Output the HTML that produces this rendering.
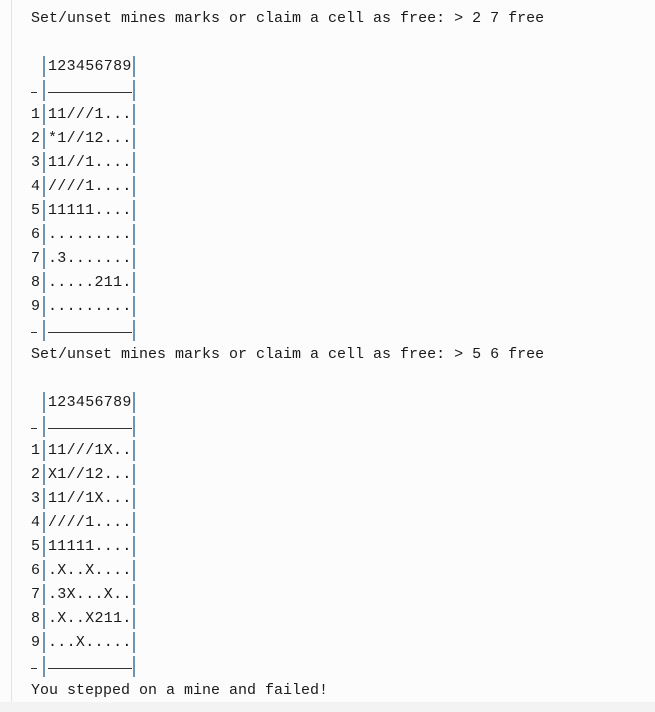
<!DOCTYPE html>
<html><head><meta charset="utf-8"><style>
html,body{margin:0;padding:0;background:#fcfcfc;width:655px;height:712px;overflow:hidden;position:relative}
.vl{position:absolute;left:11px;top:0;width:1px;height:702px;background:#e3e3e3}
.bt{position:absolute;left:0;top:702px;width:655px;height:10px;background:#f3f3f3}
.r{position:absolute;left:31px;height:24px;line-height:24px;font-family:"Liberation Mono",monospace;font-size:15px;color:#1a1a1a;white-space:pre}
.p{position:absolute;top:1px;width:2px;height:21px;background:#6f93b3}
.lab{position:absolute;left:0}
.c{position:absolute;left:17px;letter-spacing:0.3px}
.dl{position:absolute;top:13px;height:1px;background:#333}
</style></head><body>
<div class="vl"></div><div class="bt"></div>
<div id="o"></div>
<script>
var g1=["11///1...","*1//12...","11//1....","////1....","11111....",".........",".3.......",".....211.","........."];
var g2=["11///1X..","X1//12...","11//1X...","////1....","11111....",".X..X....",".3X...X..",".X..X211.","...X....."];
var h='';var y=7;
function row(html){h+='<div class="r" style="top:'+y+'px">'+html+'</div>';y+=24;}
function pipes(){return '<span class="p" style="left:12px"></span><span class="p" style="left:102px"></span>';}
function grid(g){
row(pipes()+'<span class="c">123456789</span>');
row('<span class="dl" style="left:0;width:6px"></span>'+pipes()+'<span class="dl" style="left:17px;width:84px"></span>');
for(var i=0;i<9;i++)row('<span class="lab">'+(i+1)+'</span>'+pipes()+'<span class="c">'+g[i]+'</span>');
row('<span class="dl" style="left:0;width:6px"></span>'+pipes()+'<span class="dl" style="left:17px;width:84px"></span>');
}
row('Set/unset mines marks or claim a cell as free: &gt; 2 7 free');row('');grid(g1);
row('Set/unset mines marks or claim a cell as free: &gt; 5 6 free');row('');grid(g2);
row('You stepped on a mine and failed!');
document.getElementById('o').innerHTML=h;
</script>
</body></html>
